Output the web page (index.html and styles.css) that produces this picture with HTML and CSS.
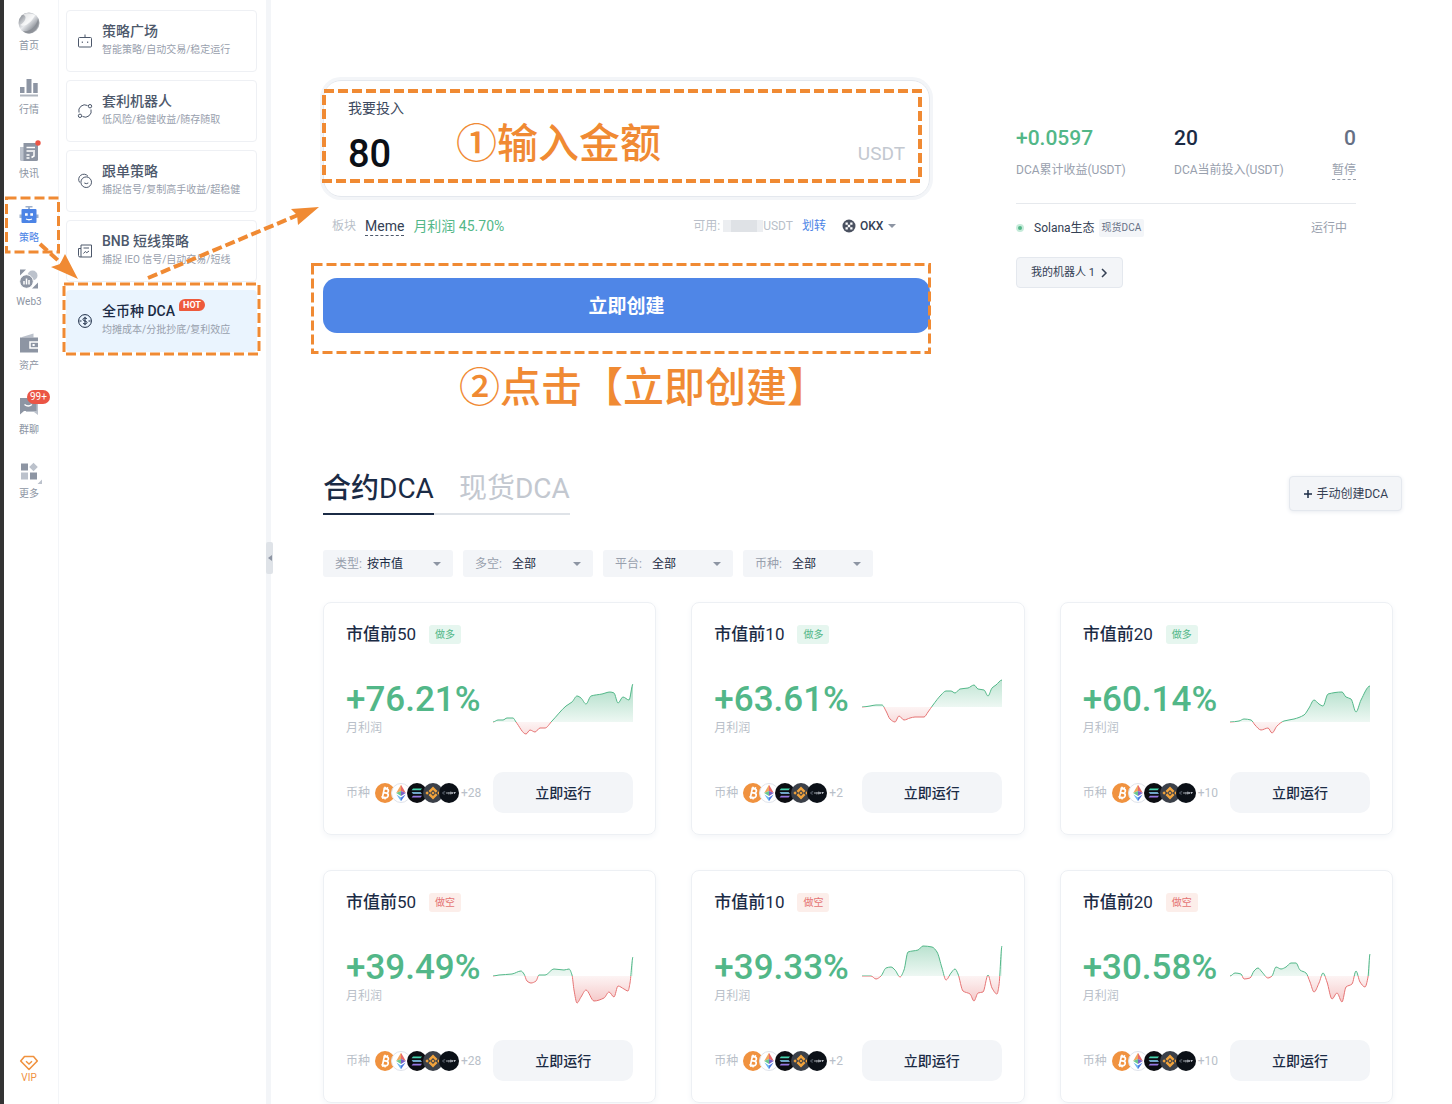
FILE: index.html
```html
<!DOCTYPE html>
<html lang="zh-CN">
<head>
<meta charset="utf-8">
<title>全币种 DCA</title>
<link rel="stylesheet" href="styles.css">
</head>
<body>
<svg class="defs" aria-hidden="true">
  <defs>
    <linearGradient id="line" gradientUnits="userSpaceOnUse" x1="0" y1="-40" x2="0" y2="40">
      <stop offset="0.5" stop-color="#52b788"/><stop offset="0.5" stop-color="#e57373"/>
    </linearGradient>
    <linearGradient id="area" gradientUnits="userSpaceOnUse" x1="0" y1="-40" x2="0" y2="40">
      <stop offset="0" stop-color="#52b788" stop-opacity="0.5"/>
      <stop offset="0.5" stop-color="#52b788" stop-opacity="0.1"/>
      <stop offset="0.5" stop-color="#e57373" stop-opacity="0.08"/>
      <stop offset="1" stop-color="#e05555" stop-opacity="0.5"/>
    </linearGradient>
    <linearGradient id="silver" x1="0" y1="0" x2="1" y2="1">
      <stop offset="0" stop-color="#6f747c"/><stop offset="0.45" stop-color="#e8eaed"/><stop offset="0.7" stop-color="#9b9fa6"/><stop offset="1" stop-color="#d5d8dc"/>
    </linearGradient>
    <linearGradient id="sol" x1="0" y1="0" x2="0" y2="1">
      <stop offset="0" stop-color="#3fe0a8"/><stop offset="1" stop-color="#a06be8"/>
    </linearGradient>
    <symbol id="btc" viewBox="0 0 20 20">
      <circle cx="10" cy="10" r="10" fill="#f0923f"/>
      <g fill="none" stroke="#fff" stroke-width="1.7" transform="rotate(12 10 10)"><path d="M7.6 5.6h3.2a2 2 0 0 1 0 4.2H8.2M7.6 9.9h3.8a2.2 2.2 0 0 1 0 4.5H7.2M8.4 5.6v8.8M9 3.8v2M11.2 3.8v2M9 14.2v2M11.2 14.2v2"/></g>
    </symbol>
    <symbol id="eth" viewBox="0 0 20 20">
      <circle cx="10" cy="10" r="9.5" fill="#fff" stroke="#dfe3ea"/>
      <path d="M10 1.8 5.2 10 10 8z" fill="#f2a65e"/><path d="m10 1.8 4.8 8.2L10 8z" fill="#e86a6a"/>
      <path d="m5.2 10 4.8-2v5z" fill="#6bc98f"/><path d="M14.800 10 10 8v5z" fill="#7a62c9"/>
      <path d="m5.400 11.600 4.600 6.600v-3.800z" fill="#6bb5f0"/><path d="m14.600 11.600-4.600 6.600v-3.800z" fill="#4a78e0"/>
    </symbol>
    <symbol id="solana" viewBox="0 0 20 20">
      <circle cx="10" cy="10" r="10" fill="#0c0d12"/>
      <path d="M6 5.400h9l-1.400 1.800H4.600zM4.600 9.100h9L15 10.900H6zM6 12.800h9l-1.400 1.800H4.600z" fill="url(#sol)"/>
    </symbol>
    <symbol id="bnb" viewBox="0 0 20 20">
      <circle cx="10" cy="10" r="10" fill="#3b4049"/>
      <path d="m5.500 8 4.500-4.500L14.500 8l-1.800 1.800L10 7.100 7.300 9.800zM5.500 12l4.500 4.500 4.500-4.500-1.800-1.800-2.700 2.700-2.700-2.700zM2.400 10l1.700-1.700L5.800 10l-1.700 1.700zM14.200 10l1.700-1.700 1.700 1.700-1.700 1.700zM8.400 10 10 8.400l1.600 1.600-1.600 1.600z" fill="#f2a33c"/>
    </symbol>
    <symbol id="dark" viewBox="0 0 20 20">
      <circle cx="10" cy="10" r="10" fill="#0b1017"/>
      <path d="M6.200 8.900H4.600l-1 1.100 1 1.100h1" fill="none" stroke="#7d8794" stroke-width=".8"/>
      <path d="M7 10h2M9.800 9v2.400M11 9.200h1.400v1.600H11zM13.400 9v2M14.600 9.600h2.200M15.400 9v2" fill="none" stroke="#c9ced6" stroke-width=".8"/>
    </symbol>
  </defs>
</svg>

<div class="app">
  <nav class="rail" aria-label="主导航">
    <a class="rail-item" href="#"><span class="rail-icon"><svg viewBox="0 0 22 22"><circle cx="11" cy="11" r="10.500" fill="url(#silver)"/><path d="M2 13C5 15 12 13 17 3.500 14 1 8 .5 5 2.700c5 1 2 8-3 10.300z" fill="#fff" opacity=".7"/><path d="M5 19c7 1 13-4 15-12 2 7-2 13-8 14.400-3 .5-5-.6-7-2.400z" fill="#83888f" opacity=".7"/></svg></span>首页</a>
    <a class="rail-item" href="#"><span class="rail-icon"><svg viewBox="0 0 22 22"><g fill="#8d95a3"><path d="M2 11h4.500v6H2zM8.500 3h5v14h-5zM15.200 7h4.500v10h-4.500z"/><path d="M2 18.500h18v2H2z" opacity=".7"/></g></svg></span>行情</a>
    <a class="rail-item" href="#"><span class="rail-icon"><svg viewBox="0 0 22 22"><path d="M2 7h4v14H3.500A1.500 1.500 0 0 1 2 19.500z" fill="#bcc2cc"/><path d="M5.500 3H20v16.500a1.500 1.500 0 0 1-1.500 1.500h-13z" fill="#8d95a3"/><path d="M8.500 7.500h8.500M8.500 11h8.500M8.500 15h3M8.500 18h3M13.500 17.500l2.500-1.500v-4" fill="none" stroke="#fff" stroke-width="1.500"/><circle cx="20" cy="3" r="2.700" fill="#eb5545"/></svg></span>快讯</a>
    <a class="rail-item active" href="#"><span class="rail-icon"><svg viewBox="0 0 22 22"><path d="M7.500 2h7v1.500H12v2h-2v-2H7.500zM1.500 10.500H4V14H1.500zM18 10.500h2.500V14H18z" fill="#9db0cc"/><rect x="3.500" y="5" width="15" height="14" rx="1" fill="#4c84e6"/><path d="M7 9.200h2.700v2.500H7zM12.300 9.200H15v2.500h-2.700z" fill="#fff"/><path d="M8 15q3 1.500 6 0" fill="none" stroke="#fff" stroke-width="1.300"/></svg></span>策略</a>
    <a class="rail-item" href="#"><span class="rail-icon"><svg viewBox="0 0 22 22"><circle cx="14.500" cy="7.500" r="5" fill="#bcc2cc"/><path d="M2 1.500h6L2 7.500zM20 20.500h-6l6-6z" fill="#8d95a3"/><circle cx="8.500" cy="13.500" r="6.800" fill="#8d95a3" stroke="#fff"/><path d="M6 13v3.500M8.500 10.500v6M11 12v4.500" stroke="#fff" stroke-width="1.500"/></svg></span>Web3</a>
    <a class="rail-item" href="#"><span class="rail-icon"><svg viewBox="0 0 22 22"><path d="M4 5 15.500 1.500v4H4z" fill="#bcc2cc"/><path d="M2 5.500h18v15H2z" fill="#8d95a3"/><path d="M21 10h-9v6h9" fill="none" stroke="#fff" stroke-width="1.500"/><path d="M14.500 12h2.200v2h-2.200z" fill="#fff"/></svg></span>资产</a>
    <a class="rail-item" href="#"><span class="rail-icon"><svg viewBox="0 0 22 22"><path d="M8 4h12v15l-4-3H8z" fill="#bcc2cc"/><path d="M2 2h16.500v13H6l-4 3.500z" fill="#8d95a3"/><path d="M6.500 8.500q3.700 3 7.400 0" fill="none" stroke="#fff" stroke-width="1.500"/></svg><span class="count">99+</span></span>群聊</a>
    <a class="rail-item" href="#"><span class="rail-icon"><svg viewBox="0 0 22 22"><path d="M3 3.500h7v7H3zM12 12.500h7v7h-7z" fill="#8d95a3"/><path d="M3 12.500h7v7H3zM15.500 2.700l4.300 4.300-4.300 4.300-4.300-4.300zM24 19.500v4.500h-4.500z" fill="#bcc2cc"/></svg></span>更多</a>
    <a class="vip" href="#"><svg viewBox="0 0 20 16"><path d="M5.500 1.500h9l3.800 4.500L10 14.500 1.700 6z" fill="none" stroke="#f0923f" stroke-width="1.600" stroke-linejoin="round"/><path d="M7 6.300l3 2.700 3-2.700" fill="none" stroke="#f0923f" stroke-width="1.400"/></svg>VIP</a>
  </nav>

  <aside class="side">
    <a class="side-card" href="#"><svg viewBox="0 0 16 16"><rect x="1.500" y="4.500" width="13" height="9.500" rx="1"/><path d="M8 4.500V1.500M5.300 8.500v1.500M10.700 8.500v1.500"/></svg><span><b>策略广场</b><small>智能策略/自动交易/稳定运行</small></span></a>
    <a class="side-card" href="#"><svg viewBox="0 0 16 16"><path d="M2 9.500A6 6 0 0 1 10.500 2.500M14 6.500A6 6 0 0 1 5.500 13.500"/><circle cx="13" cy="3.200" r="1.700"/><circle cx="3" cy="12.800" r="1.700"/></svg><span><b>套利机器人</b><small>低风险/稳健收益/随存随取</small></span></a>
    <a class="side-card" href="#"><svg viewBox="0 0 16 16"><circle cx="9.200" cy="9.200" r="5.300"/><path d="M2.700 9.500A5 5 0 1 1 11 3.300M7.300 10q2 1.300 4 0"/></svg><span><b>跟单策略</b><small>捕捉信号/复制高手收益/超稳健</small></span></a>
    <a class="side-card" href="#"><svg viewBox="0 0 16 16"><path d="M4 2h10.500v12H3a1.500 1.500 0 0 1-1.500-1.500V5.500H4zM4 5.500V14M6.500 5h5.500M6.500 10.500l1.800-2 1.500 1.200L12 8"/></svg><span><b>BNB 短线策略</b><small>捕捉 IEO 信号/自动交易/短线</small></span></a>
    <a class="side-card current" href="#"><svg viewBox="0 0 16 16"><circle cx="8" cy="8" r="6.400"/><path d="M10 6q-.5-1-2-1c-2.700 0-2.700 2.700 0 3s2.700 3 0 3q-1.500 0-2-1M8 3.800v8.400M2.500 8h2M11.500 8h2"/></svg><span><b>全币种 DCA<i class="hot">HOT</i></b><small>均摊成本/分批抄底/复利效应</small></span></a>
  </aside>

  <div class="divider"><button class="collapse" aria-label="收起"><svg viewBox="0 0 4 6"><path d="M4 0v6L0 3z" fill="#8d95a3"/></svg></button></div>

  <main class="main">
    <section class="hero">
      <form class="invest">
        <div class="amount">
          <label for="amount">我要投入</label>
          <div class="amount-row"><input id="amount" type="text" value="80"><span>USDT</span></div>
        </div>
        <div class="meta">
          <span class="muted">板块</span><a class="sector" href="#">Meme</a><span class="gain">月利润 45.70%</span>
          <span class="avail">可用:<span class="masked"></span>USDT</span><a class="transfer" href="#">划转</a>
          <label class="exchange"><svg viewBox="0 0 14 14"><circle cx="7" cy="7" r="6.500" fill="#4a5160"/><path d="M3.500 3.500h2.300v2.300H3.500zM8.200 3.500h2.300v2.300H8.200zM5.800 5.800h2.400v2.400H5.800zM3.500 8.200h2.300v2.300H3.500zM8.200 8.200h2.300v2.300H8.200z" fill="#fff"/></svg><select aria-label="交易所"><option>OKX</option></select></label>
        </div>
        <button class="create" type="button">立即创建</button>
      </form>
      <div class="stats">
        <div class="figures">
          <div><strong class="up">+0.0597</strong><span>DCA累计收益(USDT)</span></div>
          <div><strong>20</strong><span>DCA当前投入(USDT)</span></div>
          <div class="paused"><strong>0</strong><a href="#">暂停</a></div>
        </div>
        <div class="bot"><i class="dot"></i><span class="bot-name">Solana生态</span><span class="kind">现货DCA</span><span class="state">运行中</span></div>
        <button class="mine" type="button">我的机器人 1<svg viewBox="0 0 8 10"><path d="M2 1l4 4-4 4" fill="none" stroke="#344054" stroke-width="1.500"/></svg></button>
      </div>
    </section>

    <section class="market">
      <div class="bar">
        <div class="tabs"><button class="tab on" type="button"><b>合约</b>DCA</button><button class="tab" type="button">现货DCA</button></div>
        <button class="manual" type="button"><svg viewBox="0 0 10 10"><path d="M5 1v8M1 5h8" stroke="#1b2b45" stroke-width="1.500"/></svg>手动创建DCA</button>
      </div>
      <div class="filters">
        <label class="filter tight">类型:<select><option>按市值</option></select></label>
        <label class="filter">多空:<select><option>全部</option></select></label>
        <label class="filter">平台:<select><option>全部</option></select></label>
        <label class="filter">币种:<select><option>全部</option></select></label>
      </div>
      <div class="cards" id="cards"></div>
    </section>
  </main>

  <div class="notes">
    <svg viewBox="0 0 940 440" fill="none" stroke="#f08a33" stroke-width="3" stroke-dasharray="10 4">
      <rect x="6.500" y="198" width="52" height="54"/>
      <rect x="64" y="284" width="195" height="70"/>
      <rect x="324" y="91" width="596" height="90" stroke-width="4"/>
      <rect x="312.500" y="264.500" width="617" height="88"/>
      <path d="M40 244 62 264M148 278 298 215" stroke-width="4"/>
      <g fill="#f08a33" stroke="none"><path d="M78 279 51 267l9-3 5-10zM319 207l-28 2 6 6 1 10z"/></g>
    </svg>
    <p class="note first">①输入金额</p>
    <p class="note second">②点击【立即创建】</p>
  </div>
</div>
<script src="app.js"></script>
</body>
</html>
```
FILE: styles.css
```css
* { box-sizing: border-box; }
body {
  margin: 0;
  background: #fff;
  color: #1b2b45;
  font: 12px/20px Roboto, "Noto Sans CJK SC", sans-serif;
}
a { color: inherit; text-decoration: none; }
button, input, select { font: inherit; color: inherit; border: 0; background: none; padding: 0; margin: 0; outline: 0; }
select { appearance: none; }
svg { display: block; flex: none; overflow: visible; }
p { margin: 0; }
.defs { position: absolute; width: 0; height: 0; }

.app { position: relative; display: flex; min-height: 100vh; border-left: 4px solid #333; }

/* icon rail */
.rail { flex: 0 0 55px; display: flex; flex-direction: column; padding: 0 4px 0 0; border-right: 1px solid #f3f5f8; }
.rail-item { height: 64px; padding-top: 12px; display: flex; flex-direction: column; align-items: center; gap: 5px; font-size: 10px; line-height: 14px; color: #8d95a3; }
.rail-item.active { color: #4c84e6; }
.rail-icon { position: relative; }
.rail-icon svg { width: 22px; height: 22px; }
.count { position: absolute; left: 9px; top: -6px; height: 14px; padding: 0 3px; border-radius: 7px; background: #eb5545; color: #fff; }
.vip { margin-top: auto; padding-bottom: 19px; display: flex; flex-direction: column; align-items: center; font-size: 10px; line-height: 14px; color: #f0923f; }
.vip svg { width: 20px; height: 16px; }

/* strategy list */
.side { flex: 0 0 207px; padding: 10px 9px 0 7px; display: flex; flex-direction: column; gap: 8px; }
.side-card { height: 62px; padding: 0 0 0 10px; display: flex; align-items: center; gap: 9px; border: 1px solid #eef0f4; border-radius: 4px; white-space: nowrap; }
.side-card svg { width: 16px; height: 16px; fill: none; stroke: #4d586b; stroke-width: 1; }
.side-card b { display: flex; align-items: flex-start; font-size: 14px; font-weight: 500; line-height: 18px; color: #4d586b; }
.side-card small { display: block; font-size: 10px; line-height: 20px; color: #98a0ad; }
.side-card.current { background: #eaf4fe; border-color: #eaf4fe; }
.side-card.current b { color: #1b2b45; }
.side-card.current svg { stroke: #1b2b45; }
.hot { margin: -3px 0 0 4px; padding: 0 4px; border-radius: 6px 6px 6px 1px; background: #ee5a3c; color: #fff; font: 700 9px/12px Roboto, sans-serif; }
.divider { position: relative; flex: 0 0 5px; background: #f3f5f8; }
.collapse { position: absolute; left: 0; top: 542px; width: 7px; height: 32px; border-radius: 2px; background: #dfe3e8; }
.collapse svg { width: 4px; height: 6px; margin-left: 2px; }

.main { flex: 1; min-width: 0; padding: 80px 50px 0 52px; }

/* investment form */
.hero { display: grid; grid-template-columns: 607fr 340fr; column-gap: 86px; padding-right: 46px; align-items: start; }
.amount { padding: 17px 24px; border: 1px solid #e4e8ee; border-radius: 18px; box-shadow: 0 0 0 3px #f3f5f8; }
.amount label { display: block; font-size: 14px; color: #3d4a60; }
.amount-row { margin-top: 11px; display: flex; align-items: center; height: 50px; }
.amount-row input { flex: 1; min-width: 0; font-size: 38px; font-weight: 500; line-height: 50px; height: 50px; color: #0b0f16; }
.amount-row span { font-size: 19px; color: #c3c8d0; }
.meta { margin-top: 19px; padding: 0 34px 0 9px; height: 20px; display: flex; align-items: center; gap: 9px; color: #b9bfc9; white-space: nowrap; }
.sector { font-size: 14px; line-height: 18px; color: #344054; border-bottom: 1px dashed #4d586b; }
.gain { font-size: 14px; color: #52b788; }
.avail { margin-left: auto; display: flex; align-items: center; }
.masked { width: 40px; height: 12px; margin-left: 3px; background: linear-gradient(90deg, #eceef1 0 20%, #dfe2e6 20% 85%, #eceef1 85%); }
.transfer { color: #4c84e6; }
.exchange { margin-left: 7px; display: flex; align-items: center; gap: 4px; color: #344054; font-weight: 500; }
.exchange svg { width: 14px; height: 14px; }
.exchange::after, .filter::after { content: ""; border: 4px solid transparent; border-top-color: #8d95a3; border-bottom: 0; }
.create { display: block; width: 100%; height: 55px; margin-top: 42px; padding-top: 2px; border-radius: 14px; background: #4f86e7; color: #fff; font-size: 19px; font-weight: 700; }

/* totals */
.stats { padding-top: 45px; color: #98a0ad; white-space: nowrap; }
.figures { display: grid; grid-template-columns: 158px 1fr auto; padding-bottom: 23px; border-bottom: 1px solid #e6e9ed; }
.figures strong { display: block; margin-bottom: 9px; font-size: 21px; font-weight: 500; line-height: 26px; color: #1b2b45; }
.figures .up { color: #52b788; }
.paused { text-align: right; }
.figures .paused strong { color: #667085; }
.paused a { display: inline-block; line-height: 18px; border-bottom: 1px dashed #98a0ad; }
.bot { margin-top: 14px; padding-right: 9px; display: flex; align-items: center; }
.dot { width: 8px; height: 8px; border: 2px solid #c6ebda; border-radius: 50%; background: #52b788; margin-right: 10px; }
.bot-name { color: #344054; }
.kind { margin-left: 4px; padding: 0 3px; border-radius: 2px; background: #f3f5f8; color: #667085; font-size: 10px; line-height: 18px; }
.state { margin-left: auto; }
.mine { margin-top: 19px; height: 31px; padding: 0 14px; display: flex; align-items: center; gap: 5px; border: 1px solid #e4e8ee; border-radius: 4px; background: #f3f5f8; color: #344054; font-size: 11px; }
.mine svg { width: 8px; height: 10px; }

/* strategy market */
.market { margin-top: 135px; }
.bar { display: flex; justify-content: space-between; align-items: flex-start; }
.tabs { display: flex; }
.tab { padding: 1px 0 4px; font-size: 28px; line-height: 40px; color: #c3c8d0; border-bottom: 2px solid #dfe3e8; }
.tab + .tab { padding-left: 25px; }
.tab.on { color: #1b2b45; border-color: #1b2b45; }
.tab b { font-weight: 500; }
.manual { margin-top: 8px; height: 35px; padding: 0 13px; display: flex; align-items: center; gap: 3px; border: 1px solid #e4e8ee; border-radius: 4px; background: #f3f5f8; box-shadow: 0 1px 4px #e8ebf0; color: #344054; }
.manual svg { width: 10px; height: 10px; }
.filters { margin-top: 35px; display: flex; gap: 10px; }
.filter { width: 130px; height: 27px; padding: 0 12px; display: flex; align-items: center; gap: 10px; border-radius: 3px; background: #f3f5f8; color: #98a0ad; }
.filter.tight { gap: 5px; }
.filter select { flex: 1; min-width: 0; color: #1b2b45; }
.cards { margin-top: 25px; padding-right: 9px; display: grid; grid-template-columns: repeat(3, minmax(0, 1fr)); gap: 35px; }

.card { padding: 19px 22px 21px; border: 1px solid #edf0f4; border-radius: 8px; box-shadow: 0 2px 6px #f3f5f8; }
.card h3 { margin: 0; display: flex; align-items: center; font-size: 17px; font-weight: 500; line-height: 24px; }
.card h3 i { font-style: normal; font-weight: 400; }
.side-tag { margin-left: 13px; padding: 0 6px; border-radius: 3px; font-size: 10px; font-weight: 400; line-height: 19px; }
.side-tag.long { background: #e6f6ef; color: #52b788; }
.side-tag.short { background: #fceeea; color: #e57373; }
.result { margin-top: 28px; height: 70px; display: flex; justify-content: space-between; align-items: center; color: #b9bfc9; }
.result strong { display: block; font-size: 35px; font-weight: 500; line-height: 40px; color: #52b788; }
.result span { display: block; padding-bottom: 2px; line-height: 16px; }
.result svg { width: 140px; height: 70px; }
.foot { margin-top: 28px; display: flex; align-items: center; color: #b9bfc9; white-space: nowrap; }
.coins { display: flex; margin: 0 2px 0 5px; }
.coins svg { width: 20px; height: 20px; }
.coins svg + svg { margin-left: -4px; }
.run { margin-left: auto; width: 140px; height: 41px; border-radius: 10px; background: #f3f5f8; color: #1b2b45; font-size: 14px; font-weight: 500; }

/* walkthrough marks drawn over the page */
.notes { position: absolute; left: -4px; top: 0; width: 940px; height: 440px; pointer-events: none; }
.notes svg { width: 940px; height: 440px; }
.note { position: absolute; font-size: 41px; font-weight: 500; line-height: 60px; color: #f08a33; white-space: nowrap; }
.first { left: 456px; top: 114px; }
.second { left: 459px; top: 358px; }
```
FILE: app.js
```js
// Each trend point is [x, y]; y is measured from the zero line, negative is profit.
const strategies = [
  { top: 50, long: true, pct: "+76.21%", more: 28, zero: 48, trend: [[0,0],[5,-2],[10,-2],[14,-4],[20,-4],[23,0],[33,12],[37,8],[42,10],[47,6],[52,6],[59,-1],[73,-16],[79,-20],[84,-26],[88,-24],[93,-18],[98,-26],[109,-28],[117,-30],[121,-29],[125,-19],[130,-25],[136,-22],[140,-38]] },
  { top: 10, long: true, pct: "+63.61%", more: 2, zero: 33, trend: [[0,0],[8,-1],[14,-2],[20,-2],[24,4],[28,12],[33,15],[37,9],[42,13],[48,11],[53,10],[62,10],[66,5],[71,-2],[79,-12],[84,-16],[89,-16],[93,-14],[98,-18],[106,-19],[112,-22],[116,-18],[122,-17],[126,-11],[130,-19],[134,-22],[140,-27]] },
  { top: 20, long: true, pct: "+60.14%", more: 10, zero: 48, trend: [[0,0],[9,-1],[14,-3],[21,-2],[25,3],[31,8],[38,6],[42,11],[47,4],[54,-1],[64,-3],[74,-7],[79,-14],[84,-22],[89,-18],[93,-16],[98,-28],[112,-30],[116,-25],[121,-23],[126,-10],[131,-22],[140,-36]] },
  { top: 50, long: false, pct: "+39.49%", more: 28, zero: 34, trend: [[0,0],[6,-1],[19,-2],[28,-5],[31,-2],[34,5],[38,7],[43,5],[46,-1],[52,-1],[61,-7],[71,-6],[76,-7],[79,-1],[81,14],[84,27],[88,21],[93,14],[101,25],[111,22],[116,16],[121,21],[125,10],[131,13],[135,15],[137,7],[140,-19]] },
  { top: 10, long: false, pct: "+39.33%", more: 2, zero: 34, trend: [[0,0],[9,0],[14,3],[19,0],[24,-8],[29,-9],[33,-6],[38,1],[42,-6],[46,-24],[56,-26],[61,-30],[70,-29],[75,-24],[80,-8],[84,4],[89,-3],[93,-7],[96,-2],[101,15],[108,18],[112,25],[116,17],[121,16],[126,-1],[130,12],[135,18],[137,9],[140,-30]] },
  { top: 20, long: false, pct: "+30.58%", more: 10, zero: 34, trend: [[0,0],[5,-3],[11,-2],[14,3],[20,2],[24,-5],[28,-8],[32,-4],[38,2],[42,0],[46,-9],[51,-7],[56,-9],[61,-13],[66,-13],[70,-6],[76,-3],[80,6],[84,16],[89,7],[93,-3],[97,6],[102,23],[107,17],[112,26],[116,11],[122,8],[126,-5],[130,6],[135,11],[138,1],[140,-22]] }
];

// Curve through all points that keeps local peaks where they are.
function curve(p) {
  const slope = p.map((q, i) => {
    if (!i || i === p.length - 1) return 0;
    const a = (q[1] - p[i - 1][1]) / (q[0] - p[i - 1][0]);
    const b = (p[i + 1][1] - q[1]) / (p[i + 1][0] - q[0]);
    return a * b <= 0 ? 0 : (2 * a * b) / (a + b);
  });
  let d = `M${p[0]}`;
  for (let i = 1; i < p.length; i++) {
    const h = (p[i][0] - p[i - 1][0]) / 3;
    d += `C${p[i - 1][0] + h},${p[i - 1][1] + slope[i - 1] * h} ${p[i][0] - h},${p[i][1] - slope[i] * h} ${p[i]}`;
  }
  return d;
}

document.getElementById("cards").innerHTML = strategies.map(s => {
  const d = curve(s.trend);
  const end = s.trend[s.trend.length - 1][0];
  const coins = ["btc", "eth", "solana", "bnb", "dark"].map(c => `<svg><use href="#${c}"/></svg>`).join("");
  return `<article class="card">
    <h3>市值前<i>${s.top}</i><span class="side-tag ${s.long ? "long" : "short"}">${s.long ? "做多" : "做空"}</span></h3>
    <div class="result">
      <div><strong>${s.pct}</strong><span>月利润</span></div>
      <svg viewBox="0 ${-s.zero} 140 70"><path d="${d}L${end},0L0,0" fill="url(#area)"/><path d="${d}" fill="none" stroke="url(#line)"/></svg>
    </div>
    <div class="foot">币种<div class="coins">${coins}</div>+${s.more}<button class="run" type="button">立即运行</button></div>
  </article>`;
}).join("");
```
